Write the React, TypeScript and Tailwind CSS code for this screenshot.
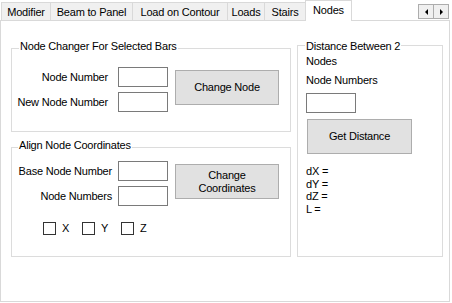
import React from 'react'

const TABS = [
  { label: 'Modifier', w: 'w-[49px]' },
  { label: 'Beam to Panel', w: 'w-[82px]' },
  { label: 'Load on Contour', w: 'w-[95px]' },
  { label: 'Loads', w: 'w-[37px]' },
  { label: 'Stairs', w: 'w-[41px]' },
]

function TextBox({ className = '' }: { className?: string }) {
  return <input readOnly className={`h-[20px] w-[50px] border border-[#7a7a7a] bg-white outline-none ${className}`} />
}

function Check({ label }: { label: string }) {
  return (
    <label className="flex w-[39px] items-center gap-[6px]">
      <span className="h-[13px] w-[13px] border border-[#333333] bg-white" />
      <span>{label}</span>
    </label>
  )
}

export default function App() {
  return (
    <div
      className="h-[303px] w-[452px] bg-white text-[11px] tracking-[-0.2px] text-black"
      style={{ fontFamily: '"Liberation Sans", Arial, sans-serif' }}
    >
      {/* tab strip */}
      <div className="flex h-[20px] items-end pl-[1px]">
        {TABS.map(t => (
          <div
            key={t.label}
            className={`flex h-[18px] ${t.w} items-center justify-center border-l border-t border-[#d9d9d9] bg-[#f0f0f0] pt-[1px]`}
          >
            {t.label}
          </div>
        ))}
        <div className="relative z-10 -mb-[1px] flex h-[21px] w-[47px] items-center justify-center border-x border-t border-[#d9d9d9] bg-white pb-[2px]">
          Nodes
        </div>
        <div className="mr-[3px] ml-auto flex h-[15px] self-start mt-[4px]">
          <div className="flex w-[16px] items-center justify-center border border-[#adadad] bg-[#f0f0f0]">
            <span className="h-0 w-0 border-y-[3px] border-r-[3px] border-y-transparent border-r-black" />
          </div>
          <div className="-ml-[1px] flex w-[16px] items-center justify-center border border-[#adadad] bg-[#f0f0f0]">
            <span className="h-0 w-0 border-y-[3px] border-l-[3px] border-y-transparent border-l-black" />
          </div>
        </div>
      </div>

      {/* tab page */}
      <div className="flex h-[282px] w-[450px] border border-[#d9d9d9] bg-white pl-[10px]">
        <div className="w-[280px]">
          {/* Node changer */}
          <div className="relative mt-[27px] h-[84px] border border-[#dcdcdc]">
            <span className="absolute top-[-10px] left-[7px] bg-white px-[1px] leading-[15px]">
              Node Changer For Selected Bars
            </span>
            <div className="flex pt-[18px]">
              <div className="flex flex-col gap-[5px]">
                <div className="flex items-center">
                  <span className="w-[96px] text-right">Node Number</span>
                  <TextBox className="ml-[10px]" />
                </div>
                <div className="flex items-center">
                  <span className="w-[96px] text-right">New Node Number</span>
                  <TextBox className="ml-[10px]" />
                </div>
              </div>
              <button className="mt-[3px] ml-[7px] h-[35px] w-[104px] border border-[#adadad] bg-[#e1e1e1]">
                Change Node
              </button>
            </div>
          </div>

          {/* Align */}
          <div className="relative mt-[15px] h-[110px] border border-[#dcdcdc]">
            <span className="absolute top-[-10px] left-[6px] bg-white px-[1px] leading-[15px]">
              Align Node Coordinates
            </span>
            <div className="flex pt-[13px]">
              <div className="flex flex-col gap-[5px]">
                <div className="flex items-center">
                  <span className="w-[100px] text-right">Base Node Number</span>
                  <TextBox className="ml-[6px]" />
                </div>
                <div className="flex items-center">
                  <span className="w-[100px] text-right">Node Numbers</span>
                  <TextBox className="ml-[6px]" />
                </div>
              </div>
              <button className="mt-[3px] ml-[7px] h-[35px] w-[104px] border border-[#adadad] bg-[#e1e1e1] leading-[13px]">
                Change
                <br />
                Coordinates
              </button>
            </div>
            <div className="mt-[14px] flex pl-[31px]">
              <Check label="X" />
              <Check label="Y" />
              <Check label="Z" />
            </div>
          </div>
        </div>

        {/* Distance */}
        <div className="ml-[6px] w-[146px]">
          <div className="relative mt-[24px] h-[212px] border border-[#dcdcdc] pl-[8px]">
            <span className="absolute top-[-7px] left-[7px] bg-white px-[1px] leading-[15px]">
              Distance Between 2
              <br />
              Nodes
            </span>
            <div className="pt-[27px] leading-[15px]">Node Numbers</div>
            <TextBox className="mt-[5px] block" />
            <button className="mt-[6px] ml-[1px] block h-[35px] w-[105px] border border-[#adadad] bg-[#e1e1e1]">
              Get Distance
            </button>
            <div className="mt-[11px] leading-[12.5px]">
              <div>dX =</div>
              <div>dY =</div>
              <div>dZ =</div>
              <div>L =</div>
            </div>
          </div>
        </div>
      </div>
    </div>
  )
}
